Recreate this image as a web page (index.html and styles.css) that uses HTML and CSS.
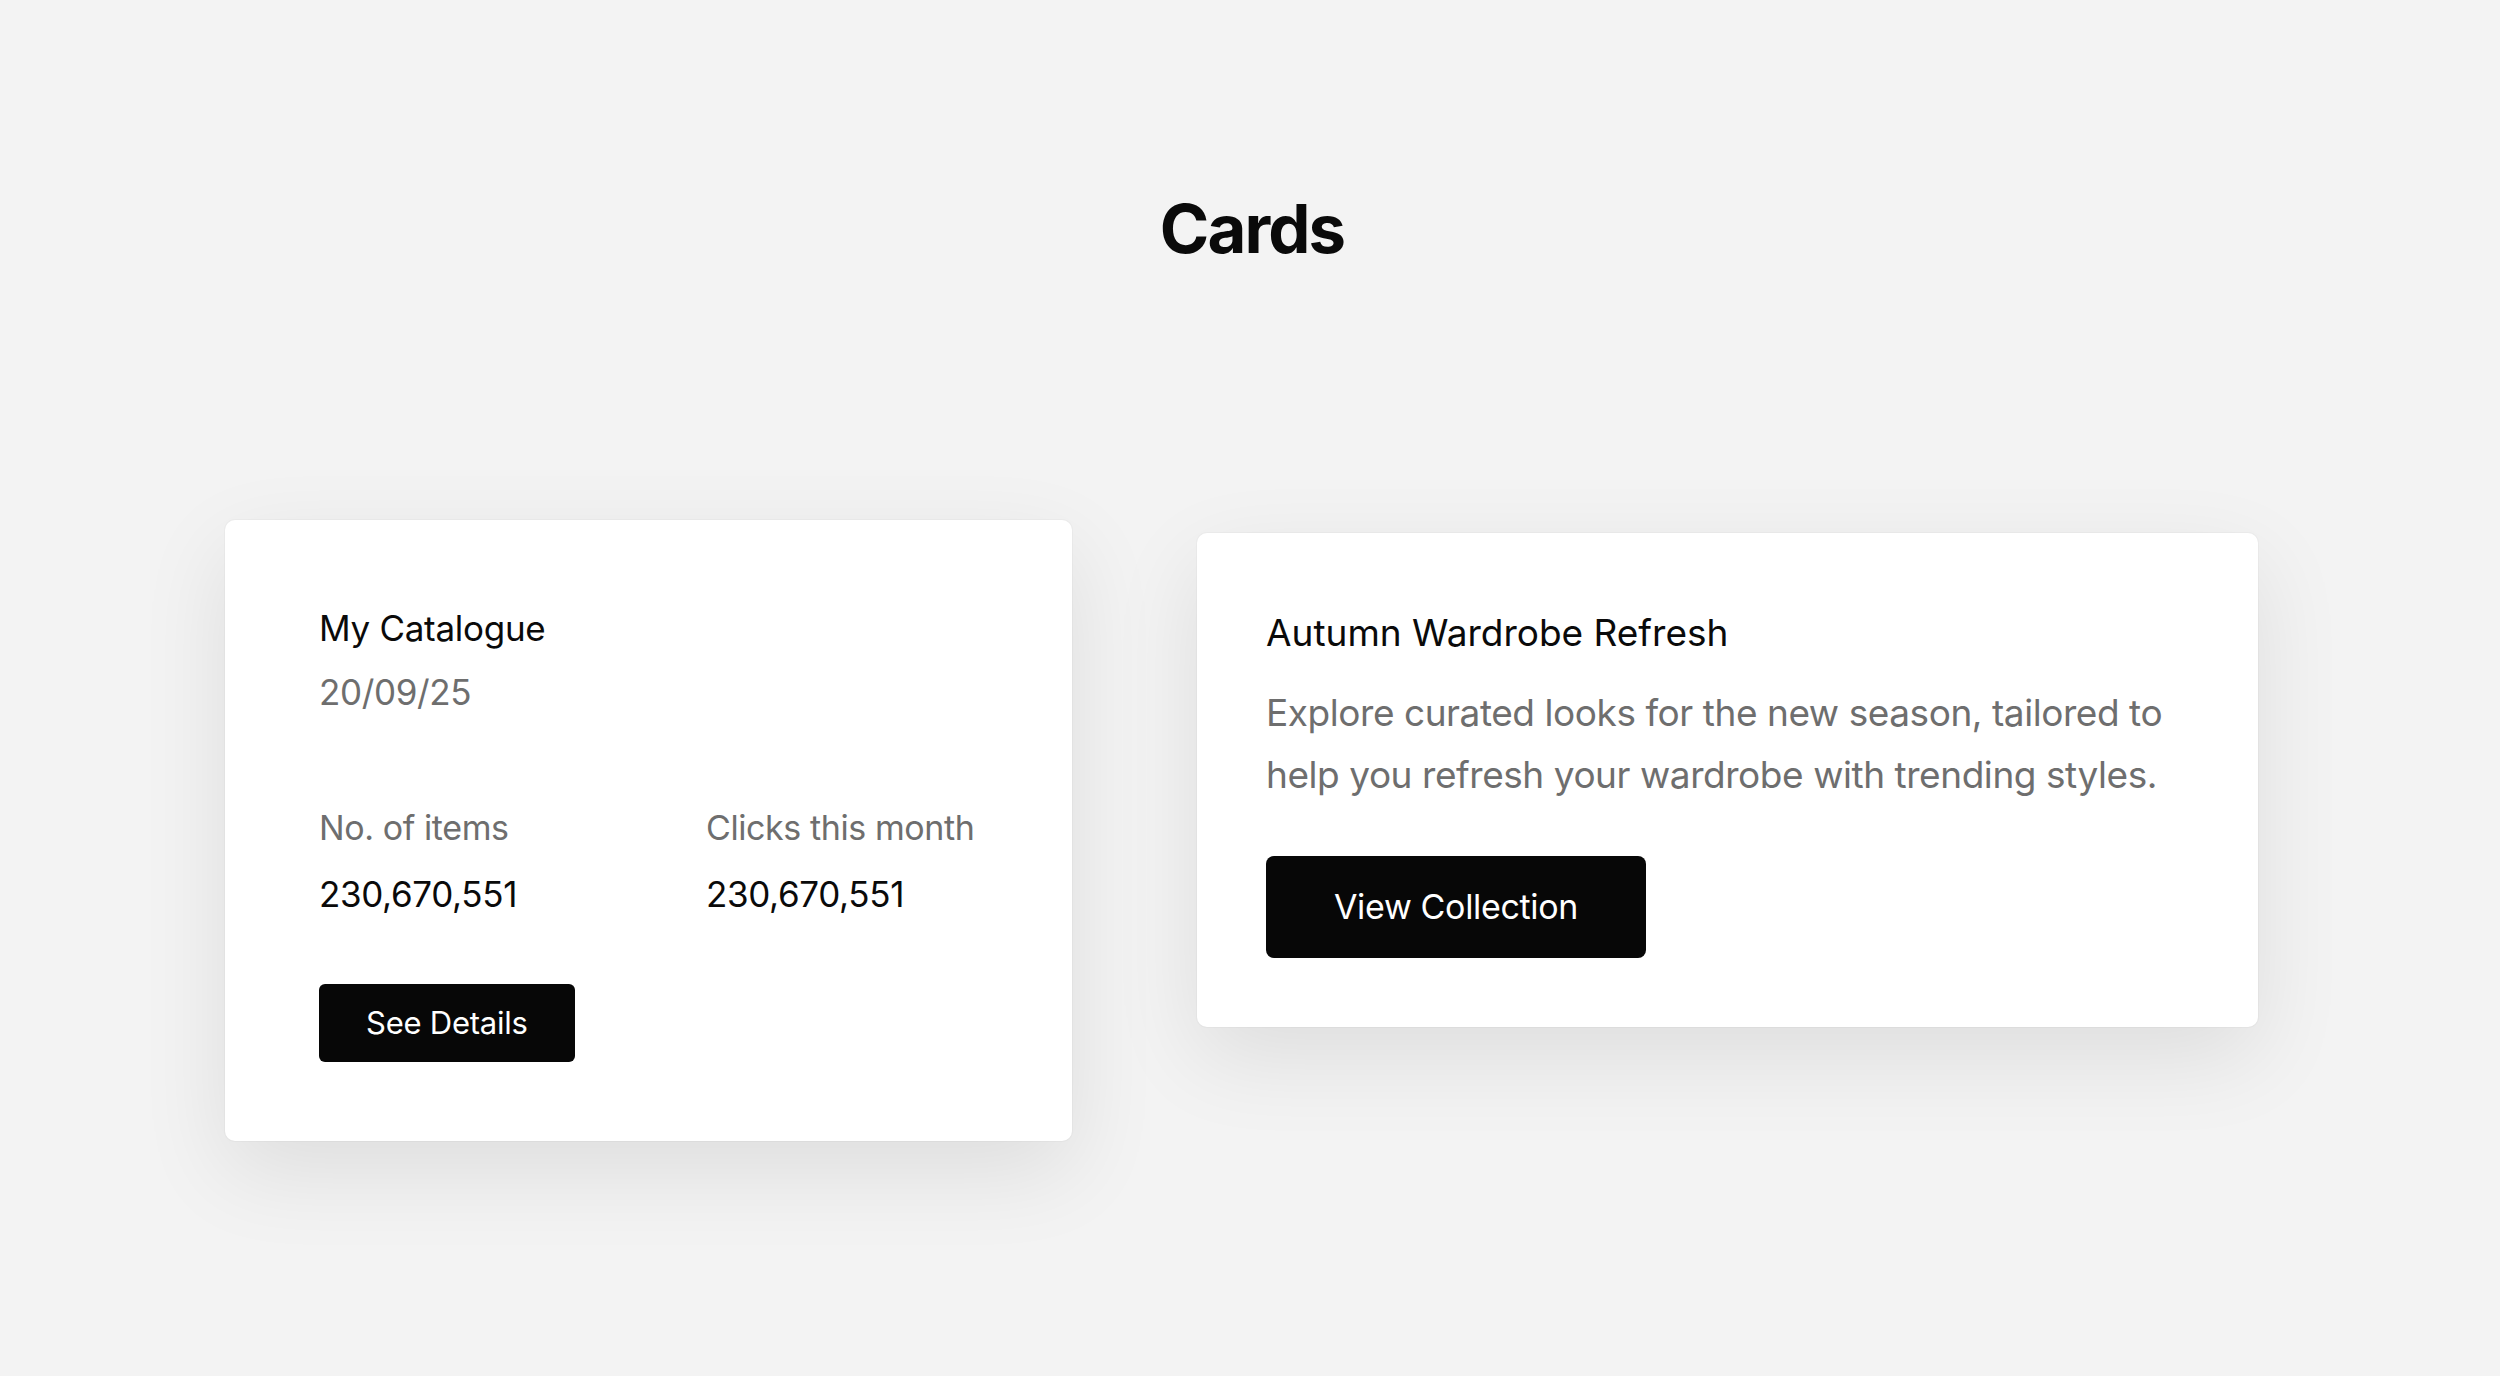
FILE: index.html
```html
<!DOCTYPE html>
<html lang="en">
<head>
<meta charset="utf-8">
<title>Cards</title>
<link rel="stylesheet" href="styles.css">
</head>
<body>
<main class="page">
  <h1 class="page-title">Cards</h1>
  <section class="cards">
    <article class="card card-catalogue">
      <h2 class="card-title">My Catalogue</h2>
      <p class="card-date">20/09/25</p>
      <div class="stats">
        <div class="stat">
          <span class="stat-label">No. of items</span>
          <span class="stat-value">230,670,551</span>
        </div>
        <div class="stat">
          <span class="stat-label">Clicks this month</span>
          <span class="stat-value">230,670,551</span>
        </div>
      </div>
      <button class="btn btn-small">See Details</button>
    </article>
    <article class="card card-promo">
      <h2 class="promo-title">Autumn Wardrobe Refresh</h2>
      <p class="promo-text">Explore curated looks for the new season, tailored to help you refresh your wardrobe with trending styles.</p>
      <button class="btn btn-large">View Collection</button>
    </article>
  </section>
</main>
</body>
</html>
```
FILE: styles.css
```css
html, body {
  margin: 0;
  padding: 0;
}
body {
  background: #f3f3f3;
  font-family: Inter, "Noto Sans", "Liberation Sans", sans-serif;
  color: #0a0a0a;
  width: 2500px;
  height: 1376px;
  overflow: hidden;
}
.page {
  padding-top: 196px;
}
.page-title {
  margin: 0;
  text-align: center;
  font-size: 67px;
  line-height: 66px;
  font-weight: 700;
  letter-spacing: -0.028em;
  color: #0a0a0a;
  padding-left: 4px;
}
.cards {
  margin-top: 258px;
  padding-left: 225px;
  display: flex;
  align-items: flex-start;
  gap: 125px;
}
.card {
  background: #ffffff;
  border-radius: 10px;
  box-shadow: 0 0 0 1px rgba(0, 0, 0, 0.025), 0 30px 90px rgba(0, 0, 0, 0.09);
  box-sizing: border-box;
}
.card-catalogue {
  width: 847px;
  padding: 76px 60px 79px 94px;
}
.card-title {
  margin: 0;
  font-size: 35px;
  line-height: 64px;
  font-weight: 400;
  color: #0a0a0a;
  letter-spacing: -0.008em;
}
.card-date {
  margin: 0;
  font-size: 35px;
  line-height: 64px;
  font-weight: 400;
  color: #6e6e6e;
  letter-spacing: -0.01em;
}
.stats {
  margin-top: 84px;
  display: grid;
  grid-template-columns: 387px 1fr;
}
.stat {
  display: flex;
  flex-direction: column;
  gap: 24px;
}
.stat-label {
  font-size: 34px;
  line-height: 40px;
  color: #6e6e6e;
  letter-spacing: -0.012em;
}
.stat-value {
  font-size: 35px;
  line-height: 44px;
  font-weight: 400;
  color: #0a0a0a;
  letter-spacing: -0.01em;
}
.btn {
  display: block;
  border: none;
  background: #070707;
  color: #ffffff;
  font-family: inherit;
  font-weight: 400;
  cursor: pointer;
}
.btn-small {
  margin-top: 68px;
  height: 78px;
  padding: 0 47px;
  border-radius: 6px;
  font-size: 31px;
  line-height: 36px;
  letter-spacing: -0.008em;
}
.card-promo {
  margin-top: 13px;
  width: 1061px;
  padding: 78px 69px 69px 69px;
}
.promo-title {
  margin: 0;
  font-size: 37px;
  line-height: 44px;
  font-weight: 400;
  color: #0a0a0a;
  letter-spacing: 0;
}
.promo-text {
  margin: 27px 0 0;
  font-size: 37px;
  line-height: 62px;
  color: #6e6e6e;
  letter-spacing: -0.012em;
}
.btn-large {
  margin-top: 50px;
  height: 102px;
  padding: 0 68px;
  border-radius: 8px;
  font-size: 34px;
  line-height: 44px;
  letter-spacing: -0.01em;
}
```
